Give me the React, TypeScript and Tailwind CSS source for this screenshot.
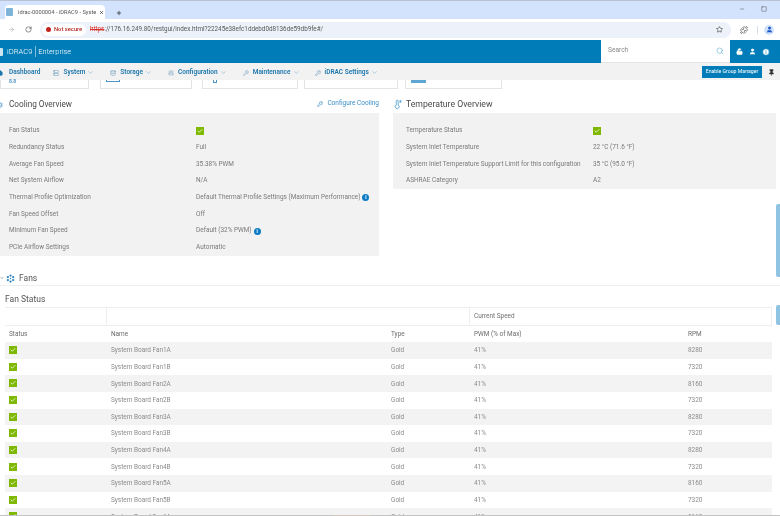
import { ArrowRight, ChevronDown, Check, Database, Home, Info, KeyRound, LockOpen, Minus, Pin, Plus, RotateCw, Search, Server, SlidersVertical, Square, Star, Puzzle, User, Wrench, X } from "lucide-react";

const FanIcon = ({ className = "" }: { className?: string }) => (
  <svg viewBox="0 0 12 12" className={className} fill="currentColor">
    <circle cx="6" cy="2" r="1.5" />
    <circle cx="2.5" cy="4" r="1.5" />
    <circle cx="9.5" cy="4" r="1.5" />
    <circle cx="6" cy="6" r="1" />
    <circle cx="2.5" cy="8" r="1.5" />
    <circle cx="9.5" cy="8" r="1.5" />
    <circle cx="6" cy="10" r="1.5" />
  </svg>
);

const ThermoIcon = () => (
  <svg viewBox="0 0 12 14" className="w-[9px] h-[11px] text-[#3d93c9]" fill="none" stroke="currentColor" strokeWidth="1">
    <path d="M3 2.5a1.3 1.3 0 0 1 2.6 0v5.2a2.6 2.6 0 1 1-2.6 0z" />
    <path d="M8.5 1v4M7 2l3 2M10 2L7 4" strokeWidth="0.8" />
  </svg>
);

const Ok = () => (
  <span className="w-[8px] h-[8px] bg-[#7fb800] flex items-center justify-center">
    <Check className="w-[6px] h-[6px] text-white" strokeWidth={3} />
  </span>
);

const InfoDot = () => (
  <span className="inline-flex w-[7px] h-[7px] ml-[2px] rounded-full bg-[#0b7cc4] items-center justify-center text-white text-[5px] font-bold leading-none">i</span>
);

const Row = ({ label, value }: { label: string; value: React.ReactNode }) => (
  <div className="flex items-center h-[16.65px] pl-[9px] whitespace-nowrap">
    <span className="w-[187px] shrink-0">{label}</span>
    <span className="flex items-center">{value}</span>
  </div>
);

const navItems = [
  { label: "System", icon: Server, cls: "mr-[16px]" },
  { label: "Storage", icon: Database, cls: "mr-[16px]" },
  { label: "Configuration", icon: SlidersVertical, cls: "mr-[16px]" },
  { label: "Maintenance", icon: Wrench, cls: "mr-[15px]" },
  { label: "iDRAC Settings", icon: KeyRound, cls: "" },
];

const cooling = [
  ["Fan Status", <Ok />],
  ["Redundancy Status", "Full"],
  ["Average Fan Speed", "35.38% PWM"],
  ["Net System Airflow", "N/A"],
  ["Thermal Profile Optimization", <>Default Thermal Profile Settings (Maximum Performance)<InfoDot /></>],
  ["Fan Speed Offset", "Off"],
  ["Minimum Fan Speed", <>Default (32% PWM)<InfoDot /></>],
  ["PCIe Airflow Settings", "Automatic"],
] as const;

const temperature = [
  ["Temperature Status", <Ok />],
  ["System Inlet Temperature", "22 °C (71.6 °F)"],
  ["System Inlet Temperature Support Limit for this configuration", "35 °C (95.0 °F)"],
  ["ASHRAE Category", "A2"],
] as const;

const fans = [
  ["1A", "8280"], ["1B", "7320"], ["2A", "8160"], ["2B", "7320"], ["3A", "8280"], ["3B", "7320"],
  ["4A", "8280"], ["4B", "7320"], ["5A", "8160"], ["5B", "7320"], ["6A", "8160"],
];

const tableCols = "grid grid-cols-[102px_280px_83px_214px_88px]";

export default function App() {
  return (
    <div className="relative w-[780px] h-[516px] overflow-hidden bg-white font-[Roboto,sans-serif] text-[#7a7a7a] text-[6.45px] blur-[0.4px]">
      {/* browser chrome */}
      <div className="h-[19px] bg-[#d3e3fd] border-t border-[#b9c2d2] flex items-end">
        <div className="ml-[5px] w-[100px] h-[14px] bg-white rounded-t-[4px] flex items-center pl-[1px] text-[#555] text-[5.7px] whitespace-nowrap">
          <span className="w-[7px] h-[8px] bg-[#7db4d8] rounded-[1px] mr-[5px] shrink-0" />
          <span className="w-[78px] shrink-0">idrac-0000004 - iDRAC9 - Syste</span>
          <X className="w-[5px] h-[5px] ml-[3px] text-[#333]" strokeWidth={3} />
        </div>
        <Plus className="w-[6px] h-[6px] ml-[11px] mb-[3px] text-[#333]" strokeWidth={3} />
        <Minus className="w-[6px] h-[6px] ml-auto mr-[16px] mb-[7px] text-[#555]" />
        <Square className="w-[6px] h-[6px] mr-[13px] mb-[7px] text-[#555]" />
      </div>
      <div className="h-[21px] bg-white flex items-center">
        <ArrowRight className="w-[7px] h-[7px] ml-[8px] text-[#aaa]" />
        <RotateCw className="w-[7px] h-[7px] ml-[10px] text-[#444]" />
        <div className="ml-[8px] w-[691px] h-[16px] bg-[#edf2fa] rounded-full flex items-center pl-[2px] whitespace-nowrap">
          <div className="h-[12px] w-[44px] bg-white rounded-full flex items-center pl-[4px] text-[#b3261e] text-[5.8px] font-medium">
            <span className="w-[5px] h-[5px] rounded-full bg-[#c5221f] mr-[3px] shrink-0" />
            Not secure
          </div>
          <span className="ml-[4px] text-[6.3px] text-[#555]">
            <span className="text-[#d93025] line-through">https</span>://176.16.249.80/restgui/index.html?22245e38efc1ddebd0d8136de59db9fe#/
          </span>
          <Star className="w-[7px] h-[7px] ml-auto mr-[8px] text-[#333]" />
        </div>
        <Puzzle className="w-[8px] h-[8px] ml-[9px] text-[#444]" />
        <span className="w-px h-[8px] bg-[#d5dde8] ml-[9px]" />
        <span className="w-[10px] h-[10px] rounded-full bg-[#d3e3fd] ml-[6px] flex items-center justify-center">
          <User className="w-[7px] h-[7px] text-[#1a56c4] fill-[#1a56c4]" />
        </span>
      </div>

      {/* iDRAC header */}
      <div className="h-[23px] bg-[#007db8] flex items-center text-white">
        <span className="w-[3px] h-[8px] bg-white/80 rounded-r-[1px]" />
        <span className="ml-[4px] text-[7.6px] font-light">iDRAC9</span>
        <span className="mx-[2.5px] w-px h-[11px] bg-white/50" />
        <span className="text-[7.4px] font-light">Enterprise</span>
        <div className="ml-auto w-[129px] h-full bg-white flex items-center pl-[7px] pr-[6px] border-b border-[#e5e5e5]">
          <span className="text-[6.6px] text-[#8a8a8a]">Search</span>
          <Search className="w-[8px] h-[8px] ml-auto text-[#6bb5dc]" />
        </div>
        <LockOpen className="w-[7px] h-[7px] ml-[6px] fill-white" />
        <User className="w-[7px] h-[7px] ml-[6px] fill-white" />
        <Info className="w-[8px] h-[8px] ml-[6px] mr-[10px] fill-white text-[#007db8]" />
      </div>

      {/* nav */}
      <div className="h-[17px] pt-[2px] bg-[#f2f2f2] flex items-center text-[#1f77ad] font-semibold text-[6.5px] whitespace-nowrap">
        <Home className="w-[6px] h-[6px] -ml-[3px] fill-[#1f77ad]" />
        <span className="ml-[6px] mr-[13px]">Dashboard</span>
        {navItems.map((n) => (
          <div key={n.label} className={`flex items-center ${n.cls}`}>
            <n.icon className="w-[6px] h-[6px] mr-[4px] text-[#6a9cbd]" />
            <span>{n.label}</span>
            <ChevronDown className="w-[7px] h-[7px] ml-[2px] text-[#7cb1d3]" />
          </div>
        ))}
        <div className="ml-auto w-[60px] h-[12px] -mt-[2px] bg-[#007db8] flex items-center justify-center text-white text-[5.2px] font-normal">Enable Group Manager</div>
        <Pin className="w-[7px] h-[7px] ml-[6px] mr-[5px] text-[#333] fill-[#333]" />
      </div>

      {/* cut off cards */}
      <div className="h-[9px] flex items-start">
        <div className="w-[89px] h-[9px] border border-t-0 border-[#e4e4e4] pl-[8px] text-[#4d94c4] text-[5px] leading-[3px] font-bold">8.8</div>
        <div className="ml-[11px] w-[92px] h-[9px] border border-t-0 border-[#e4e4e4] pl-[5px]"><div className="w-[14px] h-[2px] border-b border-x border-[#4d94c4]" /></div>
        <div className="ml-[10px] w-[96px] h-[9px] border border-t-0 border-[#e4e4e4] pl-[10px]"><div className="w-[4px] h-[3px] border-x border-b border-[#4d94c4]" /></div>
        <div className="ml-[6px] w-[94px] h-[9px] border border-t-0 border-[#e4e4e4]" />
        <div className="ml-[7px] w-[97px] h-[9px] border border-t-0 border-[#e4e4e4] pl-[5px]"><div className="w-[15px] h-[3px] bg-[#5da5d3]" /></div>
      </div>

      {/* overview panels */}
      <div className="flex gap-[14px]">
        <div className="w-[379px]">
          <div className="h-[24px] pt-[7px] flex items-center whitespace-nowrap">
            <FanIcon className="w-[6px] h-[6px] -ml-[3px] text-[#2d86c0]" />
            <span className="ml-[6px] text-[8.2px] text-[#4a4a4a]">Cooling Overview</span>
            <KeyRound className="w-[6px] h-[6px] ml-auto mb-[2px] text-[#2d86c0]" />
            <span className="ml-[4px] mb-[1px] text-[#3a8fc7] text-[6.5px]">Configure Cooling</span>
          </div>
          <div className="h-[143px] bg-[#f2f2f2] pt-[10px]">
            {cooling.map(([label, value]) => (
              <Row key={label} label={label} value={value} />
            ))}
          </div>
        </div>
        <div className="w-[383px]">
          <div className="h-[24px] pt-[7px] flex items-center pl-[1px] whitespace-nowrap">
            <ThermoIcon />
            <span className="ml-[3px] text-[8.7px] text-[#4a4a4a]">Temperature Overview</span>
          </div>
          <div className="h-[76px] bg-[#f2f2f2] pt-[10px] pl-[4px]">
            {temperature.map(([label, value]) => (
              <Row key={label} label={label} value={value} />
            ))}
          </div>
        </div>
      </div>

      {/* fans */}
      <div className="mt-[12px] h-[18px] pt-[3px] flex items-center border-b border-[#eeeeee] text-[#555] text-[8.5px]">
        <ChevronDown className="w-[4px] h-[4px] text-[#555]" strokeWidth={3} />
        <FanIcon className="w-[9px] h-[9px] ml-[2px] text-[#2d86c0]" />
        <span className="ml-[4px]">Fans</span>
      </div>
      <div className="h-[22px] pt-[5px] ml-[5px] w-[767px] flex items-center border-b border-[#eeeeee] text-[#555] text-[8.5px]">Fan Status</div>
      <div className="ml-[5px] w-[767px] text-[6.45px] whitespace-nowrap">
        <div className="h-[17px] flex border-r border-[#eeeeee] text-[#707070]">
          <div className="w-[102px] border-r border-[#eeeeee]" />
          <div className="w-[363px] border-r border-[#eeeeee]" />
          <div className="pl-[4px] pt-[1px] flex items-center">Current Speed</div>
        </div>
        <div className={`${tableCols} h-[17px] pt-[2px] items-center text-[#6c6c6c] border-t border-[#eeeeee]`}>
          <span className="pl-[4px]">Status</span>
          <span className="pl-[4px]">Name</span>
          <span className="pl-[4px]">Type</span>
          <span className="pl-[4px]">PWM (% of Max)</span>
          <span className="pl-[4px]">RPM</span>
        </div>
        {fans.map(([id, rpm]) => (
          <div key={id} className={`${tableCols} h-[16.65px] pt-[1.5px] items-center odd:bg-[#f3f3f3] text-[#8c8c8c]`}>
            <span className="pl-[4px] pb-[2px]"><Ok /></span>
            <span className="pl-[4px]">System Board Fan{id}</span>
            <span className="pl-[4px]">Gold</span>
            <span className="pl-[4px]">41%</span>
            <span className="pl-[4px]">{rpm}</span>
          </div>
        ))}
      </div>

      {/* scroll handles over the right edge */}
      <div className="absolute right-0 top-[204px] w-[4px] h-[73px] bg-[#8fc4e2] rounded-l-[2px]" />
      <div className="absolute right-0 top-[305px] w-[4px] h-[20px] bg-[#8fc4e2] rounded-l-[2px]" />
      {/* bottom edge of the captured window */}
      <div className="absolute left-0 right-0 bottom-0 h-px bg-[#c4c4c4]" />
      <div className="absolute left-[333px] bottom-0 w-[38px] h-px bg-[#cfc6bd]" />
    </div>
  );
}
